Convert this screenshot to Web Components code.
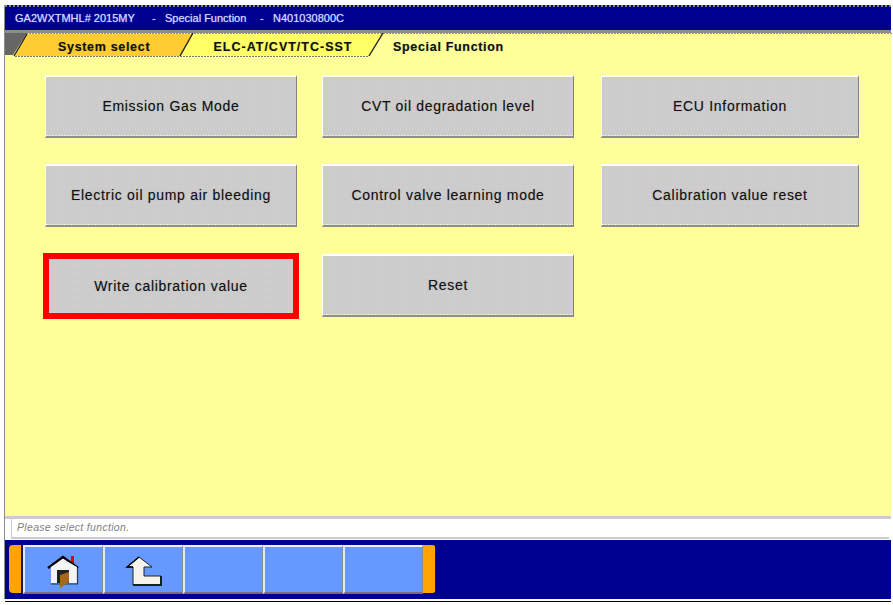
<!DOCTYPE html>
<html>
<head>
<meta charset="utf-8">
<title>Special Function</title>
<style>
  html, body { margin: 0; background: #fff; }
  body { font-family: "Liberation Sans", Arial, sans-serif; }
</style>
</head>
<body>
<diag-app>
  <title-bar>
    <span style="width:137px">GA2WXTMHL# 2015MY</span>
    <span style="width:13px">-</span>
    <span style="width:95px">Special Function</span>
    <span style="width:13px">-</span>
    <span>N401030800C</span>
  </title-bar>
  <crumb-bar></crumb-bar>
  <function-grid>
    <function-button>Emission Gas Mode</function-button>
    <function-button>CVT oil degradation level</function-button>
    <function-button>ECU Information</function-button>
    <function-button>Electric oil pump air bleeding</function-button>
    <function-button>Control valve learning mode</function-button>
    <function-button>Calibration value reset</function-button>
    <function-button marked>Write calibration value</function-button>
    <function-button>Reset</function-button>
  </function-grid>
  <status-line>Please select function.</status-line>
  <tool-bar></tool-bar>
</diag-app>

<script>
class DiagApp extends HTMLElement {
  constructor() {
    super();
    this.attachShadow({ mode: 'open' });
    this.shadowRoot.innerHTML = `
      <style>
        :host { display: block; width: 893px; height: 605px; box-sizing: border-box; padding: 5px 2px 0 4px; overflow: hidden; }
        .frame { display: flex; flex-direction: column; height: 594px; border-left: 1px solid #8c8c8c; }
        .rule { height: 1px; margin-top: 2px; margin-left: 1px; background: #000; }
      </style>
      <div class="frame"><slot></slot></div>
      <div class="rule"></div>
    `;
  }
}

class TitleBar extends HTMLElement {
  constructor() {
    super();
    this.attachShadow({ mode: 'open' });
    this.shadowRoot.innerHTML = `
      <style>
        :host {
          display: flex; align-items: center; flex: none; height: 25px; box-sizing: border-box; padding: 0 0 2px 10px;
          border-top: 2px dotted #8c8a5a; background: #000090; color: #d4daff;
          font-size: 11px; text-shadow: 0 0 1px #8f9cff;
        }
        ::slotted(span) { display: block; white-space: nowrap; }
      </style>
      <slot></slot>
    `;
  }
}

class CrumbBar extends HTMLElement {
  constructor() {
    super();
    this.attachShadow({ mode: 'open' });
    this.shadowRoot.innerHTML = `
      <style>
        :host { display: block; flex: none; height: 27px; box-sizing: border-box; border-top: 3px solid #8c8c8c; background: #ffff99; position: relative; }
        svg { position: absolute; left: 0; top: 0; }
        .tabs { position: relative; display: flex; height: 24px; box-sizing: border-box; padding-top: 3px; align-items: center; font-size: 12.5px; font-weight: bold; letter-spacing: .68px; color: #111; text-shadow: 0 0 1px rgba(0,0,0,.35); }
        .tabs span { display: block; text-align: center; white-space: nowrap; }
      </style>
      <svg width="888" height="24" viewBox="0 0 888 24">
        <path d="M0,.5 H888" stroke="#9c9a60" stroke-dasharray="2 1" fill="none"/>
        <polygon points="0,0 22,0 8,22 0,22" fill="#666"/>
        <polygon points="22,1 188,1 176,23 10,23" fill="#ffcc33"/>
        <polygon points="188,1 378,1 364,23 176,23" fill="#ffff66"/>
        <path d="M22,1 L9,23 M188,0 L175,23 M378,0 L364,23" stroke="#222" stroke-width="1.4" fill="none"/>
        <path d="M10,23.5 H364" stroke="#777" stroke-dasharray="2 1" fill="none"/>
      </svg>
      <div class="tabs">
        <span style="margin-left:53px;width:92px">System select</span>
        <span style="margin-left:63px;width:140px;letter-spacing:1px">ELC-AT/CVT/TC-SST</span>
        <span style="margin-left:40px">Special Function</span>
      </div>
    `;
  }
}

class FunctionGrid extends HTMLElement {
  constructor() {
    super();
    this.attachShadow({ mode: 'open' });
    this.shadowRoot.innerHTML = `
      <style>
        :host {
          display: grid; flex: 1; background: #ffff99; box-sizing: border-box; padding: 18px 0 0 40px;
          grid-template-columns: 277px 279px 258px; grid-template-rows: 89px 90px 63px; align-content: start;
        }
        ::slotted(function-button) { width: 252px; }
        ::slotted(function-button:nth-child(3n)) { width: 258px; }
      </style>
      <slot></slot>
    `;
  }
}

class FunctionButton extends HTMLElement {
  constructor() {
    super();
    this.attachShadow({ mode: 'open' });
    this.shadowRoot.innerHTML = `
      <style>
        :host {
          display: block; height: 63px; box-sizing: border-box; background: #cccccc;
          border-top: 2px solid #fff; border-left: 1px solid #fff; border-right: 1px solid #808080; border-bottom: 2px solid #8e8e8e;
          font-size: 14px; letter-spacing: .7px; color: #111; text-shadow: 0 0 1px rgba(0,0,0,.3);
          --dot: radial-gradient(circle at 1.5px 1.5px, #f6cccc 0 .8px, transparent .8px);
        }
        :host([marked]) { border: 6px solid #ff0000; height: 66px; margin: -1px -2px -2px; width: 256px !important; }
        .dots {
          display: flex; align-items: center; justify-content: center; height: 100%; box-sizing: border-box;
          white-space: nowrap; padding-bottom: 1px;
          background-image: repeating-linear-gradient(90deg, #eeeede 0 2px, #cccccc 2px 3px), var(--dot);
          background-size: 100% 1px, 6px 8px;
          background-position: 0 100%, 4px 11px;
          background-repeat: no-repeat, repeat;
        }
        :host([marked]) .dots { background-image: var(--dot); background-size: 6px 8px; background-position: 4px 4px; background-repeat: repeat; }
      </style>
      <div class="dots"><slot></slot></div>
    `;
  }
}

class StatusLine extends HTMLElement {
  constructor() {
    super();
    this.attachShadow({ mode: 'open' });
    this.shadowRoot.innerHTML = `
      <style>
        :host {
          display: block; flex: none; height: 24px; box-sizing: border-box; padding-left: 6px; background: #fff;
          border-top: 3px solid #cccccc; border-bottom: 1px solid #fff;
          font-size: 10.5px; font-style: italic; letter-spacing: .32px; color: #808080;
        }
        .in { height: 20px; line-height: 17px; box-sizing: border-box; margin-right: 2px; padding-left: 5px;
              border-left: 1px solid #ccc; border-bottom: 2px solid #ccc; }
      </style>
      <div class="in"><slot></slot></div>
    `;
  }
}

class ToolBar extends HTMLElement {
  constructor() {
    super();
    this.attachShadow({ mode: 'open' });
    this.shadowRoot.innerHTML = `
      <style>
        :host {
          display: flex; align-items: flex-start; flex: none; height: 59px; box-sizing: border-box; padding: 5px 0 0 4px;
          background: #000090;
        }
        .cap { width: 14px; height: 48px; background: linear-gradient(90deg, #ffa500 0 12px, #111a60 12px); border-radius: 4px 0 0 4px; }
        .cap.r { width: 13px; background: linear-gradient(90deg, #ffa500 0 12px, #111a60 12px); border-radius: 0 4px 4px 0; }
        .bar { display: flex; width: 400px; height: 49px; }
        .key {
          flex: 1; box-sizing: border-box; display: flex; align-items: center; justify-content: center; background: #6699ff;
          border-top: 2px solid #eef; border-left: 2px solid #e6e6f4; border-right: 1px solid #8a8a8a; border-bottom: 2px solid #7a6a7a;
        }
        svg { display: block; }
      </style>
      <div class="cap"></div>
      <div class="bar">
        <div class="key">
          <svg style="margin-top:4px" width="34" height="34" viewBox="0 0 34 34">
            <path d="M24 1h3v7h-3z" fill="#e00000"/>
            <path d="M1 13L16 2l15 11" fill="#fff" stroke="#000" stroke-width="2.4"/>
            <path d="M4 12L16 4l14 8v16H4z" fill="#f4f4f4"/>
            <path d="M30.5 13v16H4" fill="none" stroke="#1a3a50" stroke-width="1.2"/>
            <rect x="10" y="15" width="12" height="13" fill="#222"/>
            <path d="M13 20l9-3v10l-9 6z" fill="#a9671c"/>
          </svg>
        </div>
        <div class="key">
          <svg style="margin-top:3px" width="38" height="32" viewBox="0 0 38 32">
            <path d="M14 2L2 12h6v18h28v-9H19v-9h8z" fill="#f4f4ec" stroke="#222" stroke-width="1"/>
            <path d="M8 30h28v-9" fill="none" stroke="#0c2a10" stroke-width="2"/>
            <path d="M14 2L2 12h6" fill="none" stroke="#000" stroke-width="1.4"/>
          </svg>
        </div>
        <div class="key"></div>
        <div class="key"></div>
        <div class="key"></div>
      </div>
      <div class="cap r"></div>
    `;
  }
}

customElements.define('diag-app', DiagApp);
customElements.define('title-bar', TitleBar);
customElements.define('crumb-bar', CrumbBar);
customElements.define('function-grid', FunctionGrid);
customElements.define('function-button', FunctionButton);
customElements.define('status-line', StatusLine);
customElements.define('tool-bar', ToolBar);
</script>
</body>
</html>
